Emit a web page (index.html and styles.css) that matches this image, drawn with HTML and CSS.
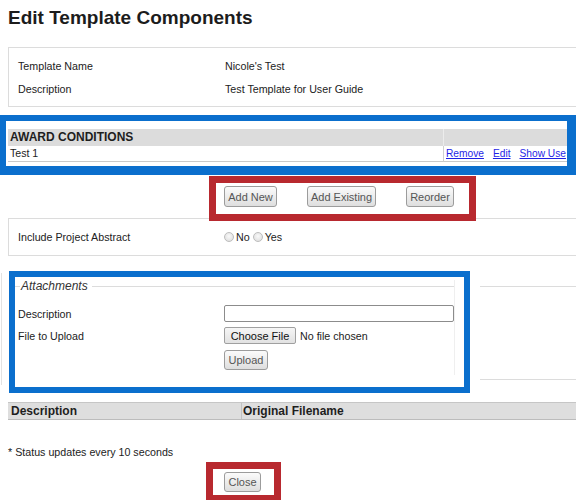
FILE: index.html
```html
<!DOCTYPE html>
<html>
<head>
<meta charset="utf-8">
<title>Edit Template Components</title>
<link rel="stylesheet" href="styles.css">
</head>
<body>
<h1 class="title">Edit Template Components</h1>

<div class="info">
  <div class="row"><span>Template Name</span><span>Nicole's Test</span></div>
  <div class="row"><span>Description</span><span>Test Template for User Guide</span></div>
</div>

<div class="mark-blue award">
  <div class="gtable">
    <div class="th">AWARD CONDITIONS</div>
    <div class="th th2"></div>
    <div class="td">Test 1</div>
    <div class="td td2"><a href="#">Remove</a><a href="#">Edit</a><a href="#">Show Use</a></div>
  </div>
</div>

<div class="mark-red actions">
  <button class="btn w-addnew">Add New</button>
  <button class="btn w-addexist">Add Existing</button>
  <button class="btn w-reorder">Reorder</button>
</div>

<div class="abstract">
  <span class="abs-label">Include Project Abstract</span>
  <span class="radio"></span><span class="rlabel">No</span>
  <span class="radio r2"></span><span class="rlabel">Yes</span>
</div>

<div class="attach-row">
  <div class="sliver"><div class="sliver-line"></div></div>
  <div class="mark-blue attach">
    <div class="attach-inner">
      <div class="legend"><span class="lg-a"></span><span class="lg-text">Attachments</span><span class="lg-b"></span></div>
      <div class="frow f1"><span>Description</span><input class="txt" type="text"></div>
      <div class="frow f2"><span>File to Upload</span><span class="filebox"><button class="fbtn">Choose File</button><span>No file chosen</span></span></div>
      <div class="frow f3"><span></span><span><button class="btn w-upload">Upload</button></span></div>
    </div>
  </div>
  <div class="attach-fill"></div>
</div>

<div class="files">
  <div class="fh">Description</div>
  <div class="fh fh2">Original Filename</div>
</div>

<div class="status">* Status updates every 10 seconds</div>

<div class="mark-red close-wrap">
  <button class="btn w-close">Close</button>
</div>
</body>
</html>
```

FILE: styles.css
```css
* { box-sizing: border-box; }
html, body { margin: 0; padding: 0; overflow: hidden; background: #fff; }
body {
  width: 576px;
  font-family: "Liberation Sans", Arial, sans-serif;
  font-size: 10.7px;
  color: #222;
}

.title {
  margin: 7px 0 0 8px;
  font-size: 19px;
  line-height: 22px;
  font-weight: bold;
  color: #1c1c1c;
}

.info {
  margin: 18px -20px 0 8px;
  border: 1px solid #dcdcdc;
  padding: 6px 9px;
  height: 60px;
}
.row {
  display: grid;
  grid-template-columns: 207px 1fr;
  height: 23px;
  align-items: center;
}

.mark-blue { border: 6px solid #0b6fcd; background: #fff; }
.mark-red { border: 7px solid #b8292f; position: relative; z-index: 1; }

.award {
  margin-top: 8px;
  width: 576px;
  height: 60px;
  border-width: 6px 9px 9px 6px;
  padding: 8px 0 0 2px;
  overflow: hidden;
}
.gtable {
  display: grid;
  grid-template-columns: 435px 1fr;
}
.th {
  background: #dcdcdc;
  height: 17px;
  line-height: 17px;
  font-size: 12px;
  font-weight: bold;
  padding-left: 2px;
  color: #1e1e1e;
}
.th2 { border-left: 1px solid #ececec; }
.td {
  height: 16px;
  line-height: 15px;
  font-size: 10.6px;
  padding-left: 2px;
  border-bottom: 1px solid #c9c9c9;
  white-space: nowrap;
}
.td2 { border-left: 1px solid #cfcfcf; font-size: 10.2px; }
.td2 a { color: #1f1fe6; text-decoration: underline; margin-right: 9px; }
.td2 a:last-child { margin-right: 0; }

.btn {
  font-family: "Liberation Sans", Arial, sans-serif;
  font-size: 11px;
  color: #555;
  background: linear-gradient(#fbfbfb, #dedede);
  border: 1px solid #9c9c9c;
  border-radius: 3px;
  padding: 0;
  height: 21px;
  text-align: center;
}
.w-addnew { width: 53px; }
.w-addexist { width: 69px; }
.w-reorder { width: 48px; }
.w-upload { width: 44px; height: 20px; }
.w-close { width: 37px; height: 20px; }

.actions {
  margin: 1px 0 0 209px;
  width: 267px;
  height: 45px;
  padding: 3px 0 0 8px;
  display: flex;
  align-items: flex-start;
  gap: 30px;
}

.abstract {
  margin: -3px -20px 0 8px;
  border: 1px solid #dcdcdc;
  height: 38px;
  padding-left: 9px;
  display: flex;
  align-items: center;
}
.abs-label { width: 206px; flex: none; }
.radio {
  width: 10px;
  height: 10px;
  border: 1px solid #bdbdbd;
  border-radius: 50%;
  background: radial-gradient(circle at 50% 40%, #f9f9f9, #dadada);
  flex: none;
}
.r2 { margin-left: 3px; }
.rlabel { margin-left: 2px; }

.attach-row {
  display: flex;
  margin-top: 15px;
  height: 122px;
}
.sliver { width: 9px; flex: none; }
.sliver-line {
  margin: 2px 0 0 1px;
  width: 1px;
  height: 112px;
  background: #e3e3e3;
}
.attach {
  width: 461px;
  height: 122px;
  flex: none;
}
.attach-inner {
  margin-top: 3px;
  width: 440px;
  height: 95px;
  border-right: 1px solid #efefef;
}
.legend {
  display: flex;
  align-items: center;
  height: 12px;
}
.lg-a { width: 5px; height: 1px; background: #dcdcdc; }
.lg-text {
  margin: 0 4px 0 1px;
  font-size: 12px;
  font-style: italic;
  color: #333;
  line-height: 12px;
}
.lg-b { flex: 1; height: 1px; background: #dcdcdc; }

.frow {
  display: grid;
  grid-template-columns: 206px auto;
  align-items: center;
  padding-left: 3px;
}
.f1 { margin-top: 13px; height: 17px; }
.f2 { margin-top: 5px; height: 17px; }
.f3 { margin-top: 6px; height: 20px; }
.txt {
  display: block;
  width: 230px;
  height: 17px;
  border: 1px solid #8c8c8c;
  border-radius: 2px;
  margin: 0;
  padding: 0;
  background: #fff;
}
.filebox { display: flex; align-items: center; }
.fbtn {
  width: 72px;
  height: 17px;
  margin-right: 4px;
  padding: 0;
  font-family: "Liberation Sans", Arial, sans-serif;
  font-size: 11px;
  color: #111;
  background: linear-gradient(#f6f6f6, #e2e2e2);
  border: 1px solid #a0a0a0;
  border-radius: 2px;
}
.attach-fill {
  flex: 1;
  align-self: flex-start;
  margin: 15px 0 0 10px;
  height: 94px;
  border-top: 1px solid #dcdcdc;
  border-bottom: 1px solid #dcdcdc;
}

.files {
  margin: 9px -20px 0 8px;
  display: grid;
  grid-template-columns: 233px 1fr;
  background: #dedede;
  border-top: 1px solid #c6c6c6;
  border-bottom: 1px solid #bcbcbc;
  height: 18px;
}
.fh {
  font-size: 12px;
  font-weight: bold;
  line-height: 16px;
  padding-left: 3px;
  color: #1e1e1e;
}
.fh2 { border-left: 1px solid #c2c2c2; padding-left: 1px; }

.status {
  margin: 26px 0 0 8px;
  line-height: 13px;
}

.close-wrap {
  margin: 3px 0 0 206px;
  width: 75px;
  height: 40px;
  padding: 3px 0 0 11px;
}
```
